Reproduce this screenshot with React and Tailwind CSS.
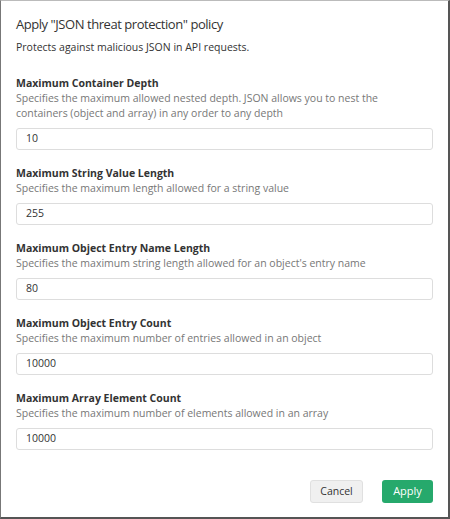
import React from "react";

const fields = [
  {
    label: "Maximum Container Depth",
    desc: "Specifies the maximum allowed nested depth. JSON allows you to nest the containers (object and array) in any order to any depth",
    value: "10",
  },
  {
    label: "Maximum String Value Length",
    desc: "Specifies the maximum length allowed for a string value",
    value: "255",
  },
  {
    label: "Maximum Object Entry Name Length",
    desc: "Specifies the maximum string length allowed for an object's entry name",
    value: "80",
  },
  {
    label: "Maximum Object Entry Count",
    desc: "Specifies the maximum number of entries allowed in an object",
    value: "10000",
  },
  {
    label: "Maximum Array Element Count",
    desc: "Specifies the maximum number of elements allowed in an array",
    value: "10000",
  },
];

export default function App() {
  return (
    <div
      className="w-[450px] h-[519px] bg-white border-l border-t border-l-[#777] border-t-[#bbb] border-r-2 border-b-2 border-r-[#555] border-b-[#555] text-[#333] flex flex-col"
      style={{ fontFamily: '"Open Sans", sans-serif' }}
    >
      <div className="px-[15px] pt-[12px]">
        <h1 className="text-[13px] tracking-[-0.45px] leading-[22px] text-[#333]">Apply "JSON threat protection" policy</h1>
        <p className="text-[10.5px] leading-[16px] mt-[4px] text-[#333]">Protects against malicious JSON in API requests.</p>
      </div>
      <div className="px-[15px] pt-[20px] flex flex-col gap-[15px]">
        {fields.map((f, i) => (
          <div key={i} className="flex flex-col">
            <div className="text-[10.5px] leading-[16px] font-bold text-[#333]">{f.label}</div>
            <div className="text-[10.5px] leading-[15px] text-[#777] pr-[40px]">{f.desc}</div>
            <div className="mt-[7px] h-[22px] border border-[#ddd] rounded-[3px] flex items-center px-[9px] text-[10.5px] text-[#333]">
              {f.value}
            </div>
          </div>
        ))}
      </div>
      <div className="flex justify-end gap-[19px] px-[15px] mt-auto mb-[14px]">
        <button className="h-[23px] w-[53px] rounded-[3px] bg-[#f0f0f0] border border-[#e0e0e0] text-[10.5px] text-[#333]">Cancel</button>
        <button className="h-[23px] w-[51px] rounded-[3px] bg-[#26a96c] text-[11px] text-white">Apply</button>
      </div>
    </div>
  );
}
